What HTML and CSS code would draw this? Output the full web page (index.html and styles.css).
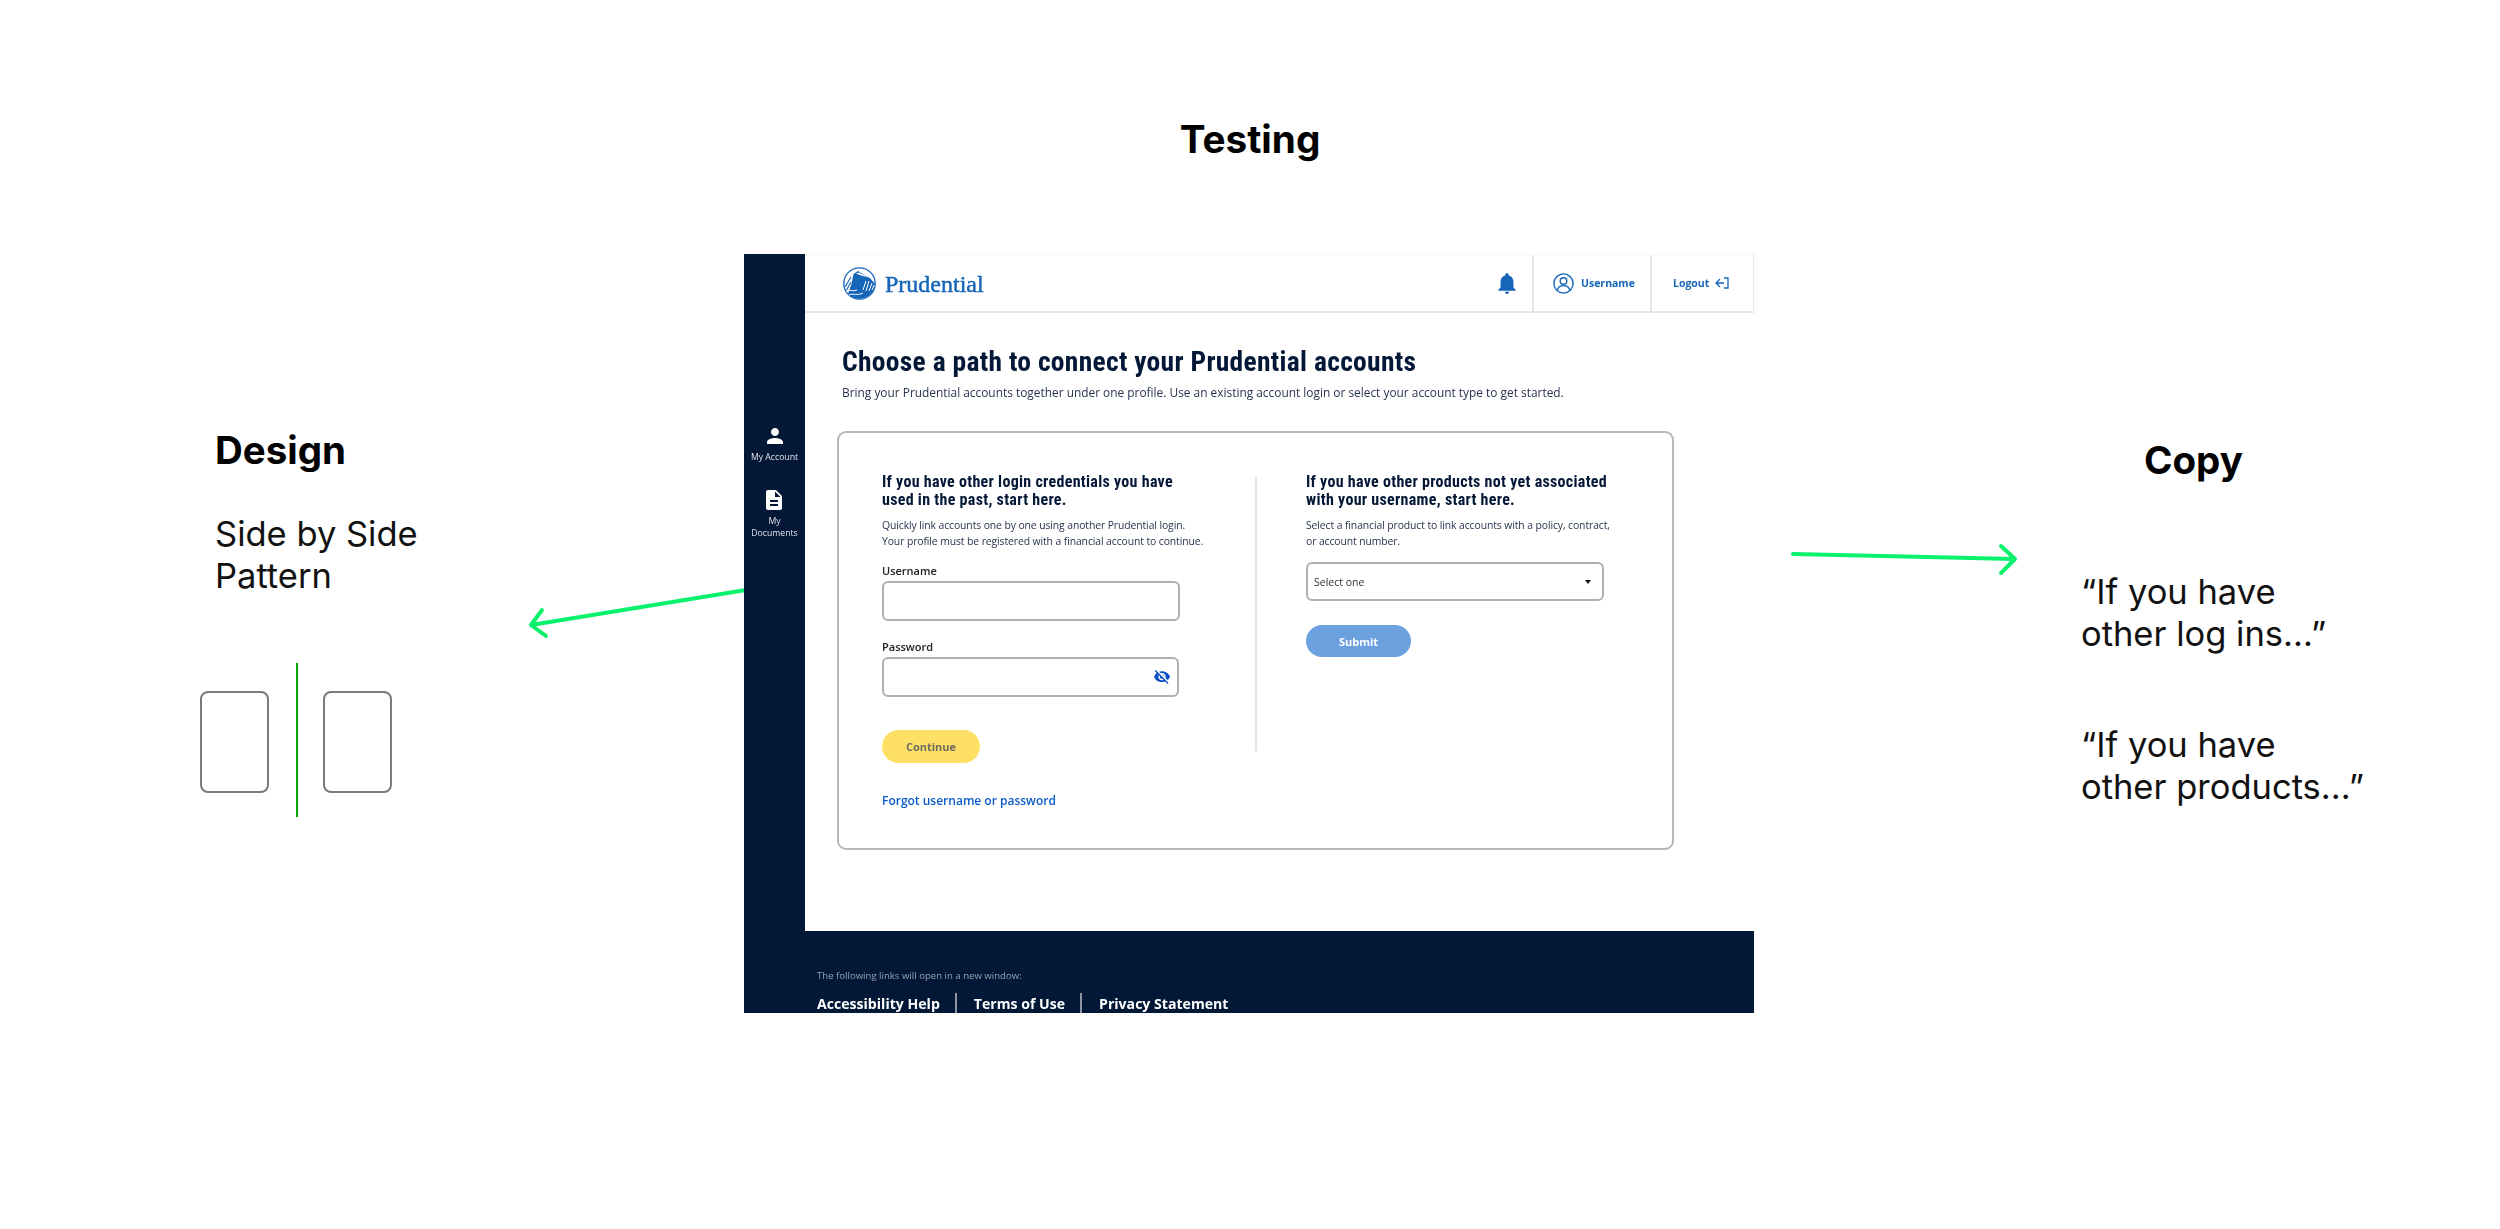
FILE: index.html
```html
<!DOCTYPE html>
<html lang="en">
<head>
<meta charset="utf-8">
<title>Testing</title>
<link rel="stylesheet" href="styles.css">
</head>
<body>
<div class="slide">
  <h1 class="title">Testing</h1>

  <section class="note note-design">
    <h2 class="note-head">Design</h2>
    <p class="note-text">Side by Side<br>Pattern</p>
  </section>

  <div class="pattern">
    <div class="pattern-box"></div>
    <div class="pattern-line"></div>
    <div class="pattern-box"></div>
  </div>

  <section class="note note-copy">
    <h2 class="note-head copy-head">Copy</h2>
    <p class="note-text">“If you have<br>other log ins...”</p>
    <p class="note-text quote-second">“If you have<br>other products...”</p>
  </section>

  <svg class="arrows" viewBox="0 0 2500 1229" width="2500" height="1229" aria-hidden="true">
    <g fill="none" stroke="#0af26c" stroke-width="4" stroke-linecap="round" stroke-linejoin="round">
      <path d="M746 590 L531 625 M542 610 L531 625 L546 636"/>
      <path d="M1793 554 L2015 559 M2001 546 L2015 559 L2001 573"/>
    </g>
  </svg>

  <div class="mock">
    <nav class="side">
      <a class="side-item">
        <svg class="side-icon" viewBox="0 0 24 24"><path d="M12 12c2.21 0 4-1.79 4-4s-1.79-4-4-4-4 1.79-4 4 1.79 4 4 4zm0 2c-2.67 0-8 1.34-8 4v2h16v-2c0-2.66-5.33-4-8-4z"/></svg>
        <span>My Account</span>
      </a>
      <a class="side-item">
        <svg class="side-icon" viewBox="0 0 24 24"><path d="M14 2H6c-1.1 0-1.99.9-1.99 2L4 20c0 1.1.89 2 1.99 2H18c1.1 0 2-.9 2-2V8l-6-6zm2 16H8v-2h8v2zm0-4H8v-2h8v2zm-3-5V3.5L18.5 9H13z"/></svg>
        <span>My<br>Documents</span>
      </a>
    </nav>

    <main class="main">
      <header class="topbar">
        <div class="brand">
          <svg class="brand-mark" viewBox="0 0 33 33">
            <circle cx="16.5" cy="16.5" r="15.7" fill="none" stroke="#1565b8" stroke-width="1.3"/>
            <path d="M5 27 L8.5 17 L10.5 7 L15 4 L27 11 L32 17 A15.7 15.7 0 0 1 5 27 Z" fill="#1565b8"/>
            <path d="M13 6.5 L16 5.5 L27 10.8 L18 8.5 Z" fill="#fff"/>
            <g fill="none" stroke="#1565b8" stroke-width="1.1">
              <path d="M2 20 L8 10"/>
              <path d="M3 24 L8 15"/>
            </g>
            <g fill="none" stroke="#fff" stroke-width="1">
              <path d="M3 24 C7 22 10 25 14 23"/>
              <path d="M6 28 C10 26 14 29 20 26"/>
              <path d="M23 14 L20 23 M26 14 L23 24 M29 16 L26 24 M31 18 L29 23"/>
            </g>
          </svg>
          <span class="brand-name">Prudential</span>
        </div>
        <div class="top-actions">
          <div class="top-bell">
            <svg class="bell" viewBox="4 2.5 16 19.5"><path d="M12 22c1.1 0 2-.9 2-2h-4c0 1.1.89 2 2 2zm6-6v-5c0-3.07-1.64-5.64-4.5-6.32V4c0-.83-.67-1.5-1.5-1.5s-1.5.67-1.5 1.5v.68C7.63 5.36 6 7.92 6 11v5l-2 2v1h16v-1l-2-2z"/></svg>
          </div>
          <a class="top-user">
            <svg class="user-icon" viewBox="0 0 21 21" fill="none" stroke="#1565b8" stroke-width="1.4">
              <circle cx="10.5" cy="10.5" r="9.6"/>
              <circle cx="10.5" cy="8" r="3.3"/>
              <path d="M4.5 17 C5 13.8 7.4 12.6 10.5 12.6 S16 13.8 16.5 17"/>
            </svg>
            <span>Username</span>
          </a>
          <a class="top-logout">
            <span>Logout</span>
            <svg class="logout-icon" viewBox="0 0 14 12" fill="none" stroke="#1565b8" stroke-width="1.3">
              <path d="M5 2 L1 6 L5 10 M1 6 H9 M9 1 H13 V11 H9"/>
            </svg>
          </a>
        </div>
      </header>

      <div class="content">
        <h2 class="page-title">Choose a path to connect your Prudential accounts</h2>
        <p class="page-sub">Bring your Prudential accounts together under one profile. Use an existing account login or select your account type to get started.</p>

        <div class="card">
          <form class="col">
            <h3 class="col-title">If you have other login credentials you have<br>used in the past, start here.</h3>
            <p class="col-text">Quickly link accounts one by one using another Prudential login.<br>Your profile must be registered with a financial account to continue.</p>
            <div class="label label-first">Username</div>
            <div class="field"></div>
            <div class="label label-second">Password</div>
            <div class="field field-short">
              <svg class="eye" viewBox="1 3 22 19"><path d="M12 7c2.76 0 5 2.24 5 5 0 .65-.13 1.26-.36 1.83l2.92 2.92c1.51-1.26 2.7-2.89 3.43-4.75-1.73-4.39-6-7.5-11-7.5-1.4 0-2.74.25-3.98.7l2.16 2.16C10.74 7.13 11.35 7 12 7zM2 4.27l2.28 2.28.46.46C3.08 8.3 1.78 10.02 1 12c1.73 4.39 6 7.5 11 7.5 1.55 0 3.03-.3 4.38-.84l.42.42L19.73 22 21 20.73 3.27 3 2 4.27zM7.53 9.8l1.55 1.55c-.05.21-.08.43-.08.65 0 1.66 1.34 3 3 3 .22 0 .44-.03.65-.08l1.55 1.55c-.67.33-1.41.53-2.2.53-2.76 0-5-2.24-5-5 0-.79.2-1.53.53-2.2zm4.31-.78l3.15 3.15.02-.16c0-1.66-1.34-3-3-3l-.17.01z"/></svg>
            </div>
            <div class="btn btn-continue">Continue</div>
            <a class="forgot">Forgot username or password</a>
          </form>
          <div class="col-divider"></div>
          <form class="col col-right">
            <h3 class="col-title">If you have other products not yet associated<br>with your username, start here.</h3>
            <p class="col-text">Select a financial product to link accounts with a policy, contract,<br>or account number.</p>
            <div class="select"><span>Select one</span><i class="caret"></i></div>
            <div class="btn btn-submit">Submit</div>
          </form>
        </div>
      </div>
    </main>

    <footer class="foot">
      <p class="foot-note">The following links will open in a new window:</p>
      <div class="foot-links">
        <a class="foot-link">Accessibility Help</a>
        <a class="foot-link">Terms of Use</a>
        <a class="foot-link">Privacy Statement</a>
      </div>
    </footer>
  </div>
</div>
</body>
</html>
```
FILE: styles.css
```css
* { box-sizing: border-box; }
html, body { margin: 0; padding: 0; background: #fff; }
body { font-family: "Inter", "Liberation Sans", sans-serif; color: #000; overflow: hidden; }
h1, h2, h3, p { margin: 0; }

.slide { position: relative; width: 2500px; height: 1229px; background: #fff; overflow: hidden; }

.title { position: absolute; left: 0; right: 0; top: 115px; text-align: center; font-size: 38.7px; line-height: 48px; font-weight: 700; }

.note { position: absolute; }
.note-design { left: 215px; top: 426px; }
.note-copy { left: 2081px; top: 436px; }
.note-head { font-size: 38.5px; line-height: 48px; font-weight: 700; }
.note-text { font-size: 34.5px; line-height: 42px; font-weight: 400; color: #111; }
.note-design .note-text { margin-top: 39px; }
.copy-head { margin-left: 63px; margin-bottom: 87px; }
.quote-second { margin-top: 69px; }

.pattern { position: absolute; left: 200px; top: 663px; display: flex; align-items: flex-start; height: 154px; }
.pattern-box { width: 69px; height: 102px; margin-top: 28px; border: 2px solid #7a7a7a; border-radius: 8px; background: #fff; }
.pattern-line { width: 2px; height: 154px; background: #00a800; margin: 0 25px 0 27px; }

.arrows { position: absolute; left: 0; top: 0; }

/* embedded screenshot */
.mock {
  position: absolute; left: 744px; top: 254px; width: 1010px; height: 759px;
  display: grid; grid-template-columns: 61px 949px; grid-template-rows: 677px 82px;
  background: #031737; overflow: hidden; filter: blur(0.45px);
  font-family: "Open Sans", "Noto Sans", sans-serif;
}

.side { display: flex; flex-direction: column; align-items: center; padding-top: 170px; gap: 24px; color: #fff; }
.side-item { display: flex; flex-direction: column; align-items: center; text-align: center; font-size: 8.7px; line-height: 12.5px; color: #dfe3ea; }
.side-icon { width: 24px; height: 24px; fill: #fff; margin-bottom: 3px; }

.main { background: #fff; display: flex; flex-direction: column; }
.topbar { height: 59px; flex: none; display: flex; justify-content: space-between; border-bottom: 2px solid #e6e6e6; border-top: 1px solid #f6f6f6; border-right: 1px solid #e8e8e8; }
.brand { display: flex; align-items: center; padding-left: 38px; gap: 9px; }
.brand-mark { width: 33px; height: 33px; display: block; }
.brand-name { font-family: "Liberation Serif", serif; font-weight: 400; font-size: 24px; -webkit-text-stroke: 0.45px #1565b8; color: #1565b8; padding-top: 2px; }

.top-actions { display: flex; align-items: stretch; color: #1565b8; font-size: 10.5px; font-weight: 700; }
.top-actions a { display: flex; align-items: center; }
.top-bell { display: flex; align-items: center; padding-right: 16px; }
.bell { width: 18px; height: 21px; fill: #1565b8; display: block; }
.top-user { width: 118px; padding-left: 19px; gap: 7px; border-left: 2px solid #e6e6e6; }
.user-icon { width: 21px; height: 21px; }
.top-logout { width: 103px; padding-left: 21px; gap: 6px; border-left: 2px solid #e6e6e6; }
.logout-icon { width: 14px; height: 12px; }

.content { padding: 33px 0 0 32px; }
.page-title { margin-left: 5px; font-family: "Roboto", "Liberation Sans", sans-serif; font-stretch: 75%; font-weight: 700; font-size: 27.5px; line-height: 32px; letter-spacing: 0.3px; color: #031737; }
.page-sub { margin: 4px 0 0 5px; font-size: 11.9px; line-height: 20px; color: #28344f; }

.card {
  margin-top: 29px; width: 837px; height: 419px; padding: 40px 0 0 43px;
  border: 2px solid #b8b8b8; border-radius: 9px;
  display: grid; grid-template-columns: 373px 2px 1fr; align-items: start;
}
.col-divider { width: 2px; height: 274px; margin-top: 4px; background: #e4e4e4; }
.col-right { padding-left: 49px; }
.col-title { font-family: "Roboto", "Liberation Sans", sans-serif; font-stretch: 75%; font-weight: 700; font-size: 16px; line-height: 18px; letter-spacing: 0.29px; color: #031737; }
.col-text { margin-top: 9px; font-size: 10.4px; line-height: 15.5px; color: #28344f; letter-spacing: -0.1px; }

.label { font-size: 11px; line-height: 16px; font-weight: 600; color: #222; }
.label-first { margin-top: 14px; }
.label-second { margin-top: 18px; }
.field { margin-top: 2px; width: 298px; height: 40px; border: 2px solid #b0b0b0; border-radius: 6px; display: flex; align-items: center; justify-content: flex-end; padding-right: 7px; }
.field-short { width: 297px; }
.eye { width: 16px; height: 14px; fill: #0b4fc4; display: block; }

.btn { display: flex; align-items: center; justify-content: center; font-size: 11px; font-weight: 700; border-radius: 17px; }
.btn-continue { margin-top: 33px; width: 98px; height: 33px; background: #ffe066; color: #6d6c60; }
.btn-submit { margin-top: 24px; width: 105px; height: 32px; background: #6ca1e0; color: #fff; }
.forgot { display: block; margin-top: 29px; font-size: 12px; line-height: 18px; font-weight: 600; color: #0b5bc9; }

.select { margin-top: 13px; width: 298px; height: 39px; border: 2px solid #b0b0b0; border-radius: 6px; display: flex; align-items: center; justify-content: space-between; padding: 0 11px 0 6px; font-size: 10.5px; color: #333; }
.caret { width: 0; height: 0; border-left: 3.5px solid transparent; border-right: 3.5px solid transparent; border-top: 4px solid #111; }

.foot { grid-column: 1 / 3; padding: 38px 0 0 73px; }
.foot-note { font-size: 9.6px; line-height: 14px; color: #98a0b0; }
.foot-links { display: flex; margin-top: 10px; }
.foot-link { height: 24px; font-size: 14.1px; line-height: 21px; font-weight: 700; color: #fff; padding-right: 15px; margin-right: 17px; border-right: 2px solid #8d95a6; }
.foot-link:last-child { border-right: 0; }
```
